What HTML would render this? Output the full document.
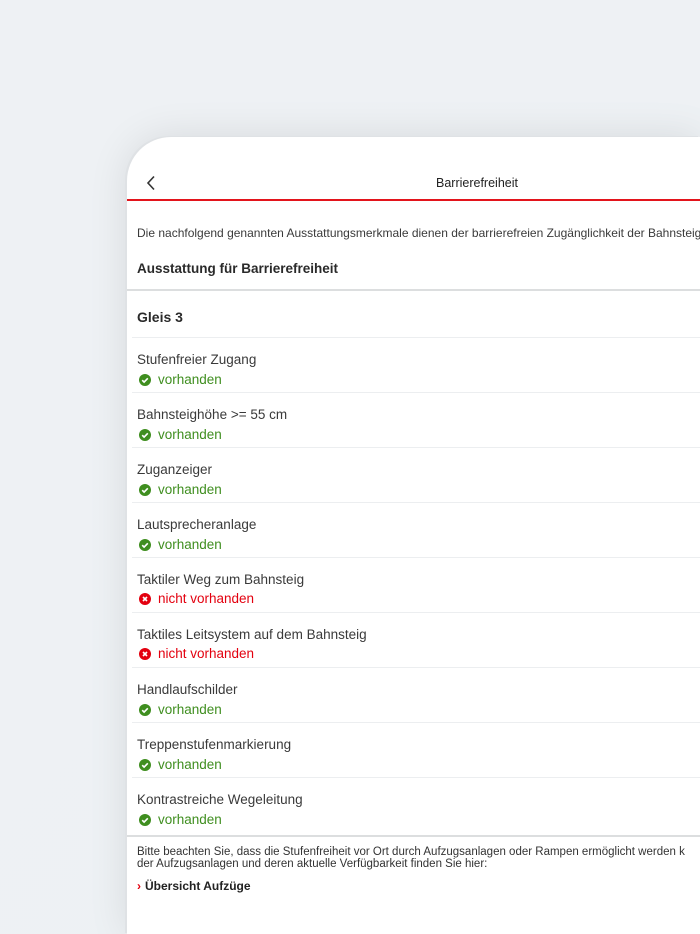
<!DOCTYPE html>
<html style="overflow:hidden;height:934px"><head><meta charset="utf-8"><style>
*{margin:0;padding:0;box-sizing:border-box}
body{width:700px;height:934px;overflow:hidden;background:linear-gradient(135deg,#eef1f4,#edf1f4);font-family:"Liberation Sans","DejaVu Sans",sans-serif;position:relative;color:#333}
.frame{position:absolute;left:127px;top:137px;width:573px;height:797px;background:#fff;border-radius:44px 0 0 0;box-shadow:-2px -1px 0 #dfe2e5,0 0 40px rgba(0,0,0,0.10)}
.t{position:absolute;white-space:nowrap}
.hl{position:absolute;left:0;right:0;height:1px;background:#eceef0}
.title{font-size:13.5px;color:#3a3a3a}
.st{font-size:13.5px;display:flex;align-items:center}
.st svg{margin-right:7px}
.g{color:#3f8e1f}.r{color:#e3000f}
</style></head><body>
<div class="frame">
  <svg class="t" style="left:19px;top:38px" width="10" height="16" viewBox="0 0 10 16"><path d="M8 1.5L2 8l6 6.5" fill="none" stroke="#333" stroke-width="1.6"/></svg>
  <div class="t" style="left:309px;top:39px;font-size:12.5px;color:#222">Barrierefreiheit</div>
  <div style="position:absolute;left:0;right:0;top:62px;height:2px;background:#e3141c"></div>
  <div class="t" style="left:10px;top:89px;font-size:12px;color:#3a3a3a">Die nachfolgend genannten Ausstattungsmerkmale dienen der barrierefreien Zugänglichkeit der Bahnsteige</div>
  <div class="t" style="left:10px;top:124px;font-size:13.5px;font-weight:bold;color:#2a2a2a">Ausstattung für Barrierefreiheit</div>
  <div style="position:absolute;left:0;right:0;top:152px;height:2px;background:#dcdedf"></div>
  <div class="t" style="left:10px;top:172px;font-size:14px;font-weight:bold;color:#2a2a2a">Gleis 3</div>
  <div class="hl" style="top:200px;left:5px"></div>
</div>
<div style="position:absolute;left:127px;top:338px;width:573px">
  <div style="position:relative;height:55px"><div class="t title" style="left:10px;top:14px">Stufenfreier Zugang</div><div class="t st g" style="left:12px;top:34px"><svg width="12" height="12" viewBox="0 0 12 12"><circle cx="6" cy="6" r="6" fill="#3f8e1f"/><path d="M3.2 6.2l1.9 1.9 3.7-3.8" fill="none" stroke="#fff" stroke-width="1.6"/></svg>vorhanden</div><div class="hl" style="top:54px;left:5px"></div></div>
  <div style="position:relative;height:55px"><div class="t title" style="left:10px;top:14px">Bahnsteighöhe &gt;= 55 cm</div><div class="t st g" style="left:12px;top:34px"><svg width="12" height="12" viewBox="0 0 12 12"><circle cx="6" cy="6" r="6" fill="#3f8e1f"/><path d="M3.2 6.2l1.9 1.9 3.7-3.8" fill="none" stroke="#fff" stroke-width="1.6"/></svg>vorhanden</div><div class="hl" style="top:54px;left:5px"></div></div>
  <div style="position:relative;height:55px"><div class="t title" style="left:10px;top:14px">Zuganzeiger</div><div class="t st g" style="left:12px;top:34px"><svg width="12" height="12" viewBox="0 0 12 12"><circle cx="6" cy="6" r="6" fill="#3f8e1f"/><path d="M3.2 6.2l1.9 1.9 3.7-3.8" fill="none" stroke="#fff" stroke-width="1.6"/></svg>vorhanden</div><div class="hl" style="top:54px;left:5px"></div></div>
  <div style="position:relative;height:55px"><div class="t title" style="left:10px;top:14px">Lautsprecheranlage</div><div class="t st g" style="left:12px;top:34px"><svg width="12" height="12" viewBox="0 0 12 12"><circle cx="6" cy="6" r="6" fill="#3f8e1f"/><path d="M3.2 6.2l1.9 1.9 3.7-3.8" fill="none" stroke="#fff" stroke-width="1.6"/></svg>vorhanden</div><div class="hl" style="top:54px;left:5px"></div></div>
  <div style="position:relative;height:55px"><div class="t title" style="left:10px;top:14px">Taktiler Weg zum Bahnsteig</div><div class="t st r" style="left:12px;top:33px"><svg width="12" height="12" viewBox="0 0 12 12"><circle cx="6" cy="6" r="6" fill="#e3000f"/><path d="M4 4l4 4M8 4l-4 4" fill="none" stroke="#fff" stroke-width="1.6"/></svg>nicht vorhanden</div><div class="hl" style="top:54px;left:5px"></div></div>
  <div style="position:relative;height:55px"><div class="t title" style="left:10px;top:14px">Taktiles Leitsystem auf dem Bahnsteig</div><div class="t st r" style="left:12px;top:33px"><svg width="12" height="12" viewBox="0 0 12 12"><circle cx="6" cy="6" r="6" fill="#e3000f"/><path d="M4 4l4 4M8 4l-4 4" fill="none" stroke="#fff" stroke-width="1.6"/></svg>nicht vorhanden</div><div class="hl" style="top:54px;left:5px"></div></div>
  <div style="position:relative;height:55px"><div class="t title" style="left:10px;top:14px">Handlaufschilder</div><div class="t st g" style="left:12px;top:34px"><svg width="12" height="12" viewBox="0 0 12 12"><circle cx="6" cy="6" r="6" fill="#3f8e1f"/><path d="M3.2 6.2l1.9 1.9 3.7-3.8" fill="none" stroke="#fff" stroke-width="1.6"/></svg>vorhanden</div><div class="hl" style="top:54px;left:5px"></div></div>
  <div style="position:relative;height:55px"><div class="t title" style="left:10px;top:14px">Treppenstufenmarkierung</div><div class="t st g" style="left:12px;top:34px"><svg width="12" height="12" viewBox="0 0 12 12"><circle cx="6" cy="6" r="6" fill="#3f8e1f"/><path d="M3.2 6.2l1.9 1.9 3.7-3.8" fill="none" stroke="#fff" stroke-width="1.6"/></svg>vorhanden</div><div class="hl" style="top:54px;left:5px"></div></div>
  <div style="position:relative;height:57px"><div class="t title" style="left:10px;top:14px">Kontrastreiche Wegeleitung</div><div class="t st g" style="left:12px;top:34px"><svg width="12" height="12" viewBox="0 0 12 12"><circle cx="6" cy="6" r="6" fill="#3f8e1f"/><path d="M3.2 6.2l1.9 1.9 3.7-3.8" fill="none" stroke="#fff" stroke-width="1.6"/></svg>vorhanden</div></div>
  <div style="height:2px;background:#dcdedf"></div>
  <div class="t" style="left:10px;top:508px;font-size:11.5px;line-height:12px;color:#333">Bitte beachten Sie, dass die Stufenfreiheit vor Ort durch Aufzugsanlagen oder Rampen ermöglicht werden k<br>der Aufzugsanlagen und deren aktuelle Verfügbarkeit finden Sie hier:</div>
  <div class="t" style="left:10px;top:541px;font-size:12px;font-weight:bold;color:#222"><span style="color:#e3000f;margin-right:4px">›</span>Übersicht Aufzüge</div>
</div>
</body></html>
